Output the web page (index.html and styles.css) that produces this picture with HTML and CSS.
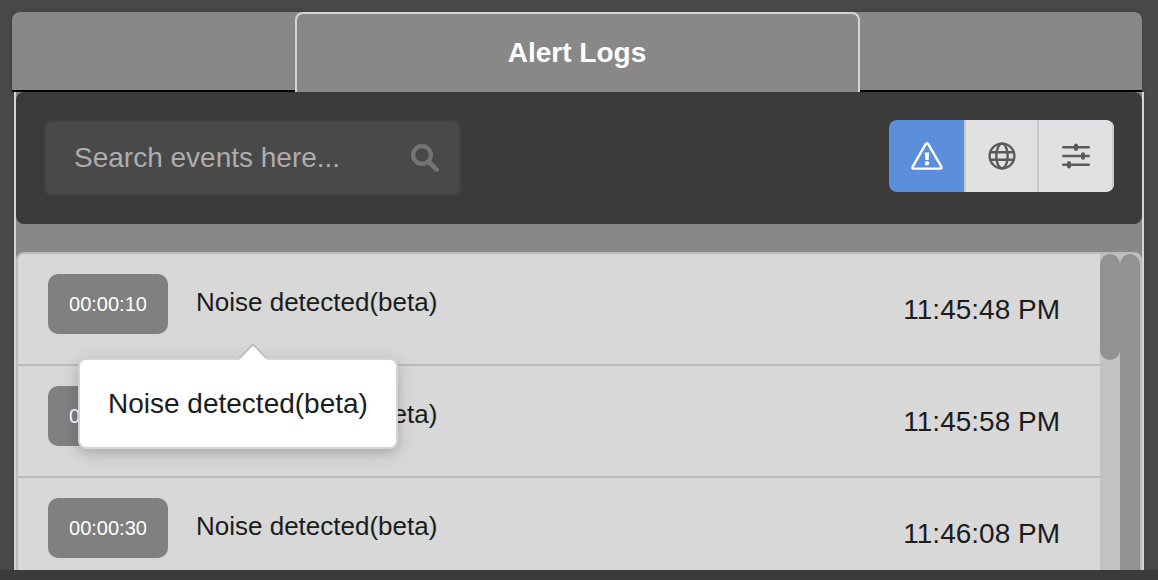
FILE: index.html
```html
<!DOCTYPE html>
<html lang="en">
<head>
    <meta charset="UTF-8">
    <meta name="viewport" content="width=device-width, initial-scale=1.0">
    <title>Alert Logs</title>
    <link rel="stylesheet" href="styles.css">
</head>
<body>
    <main class="panel">
        <nav class="tabs">
            <a class="tab active" href="#logs">Alert Logs</a>
        </nav>

        <section class="content" id="logs">
            <div class="toolbar">
                <div class="search">
                    <input type="text" placeholder="Search events here..." aria-label="Search events">
                    <svg class="search-icon" viewBox="0 0 28 28" aria-hidden="true">
                        <circle cx="11" cy="11" r="8.9" fill="none" stroke="currentColor" stroke-width="4.2"/>
                        <path d="M18 18l7.6 7.6" stroke="currentColor" stroke-width="4.6" stroke-linecap="round"/>
                    </svg>
                </div>

                <div class="filters">
                    <button class="filter selected" type="button" aria-label="Alerts">
                        <svg width="32" height="28" viewBox="0 0 32 28" fill="none" stroke="currentColor">
                            <path d="M14.7 2.2L1.7 24.7Q.8 26.6 2.8 26.6H29.2Q31.2 26.6 30.3 24.7L17.3 2.2Q16 .2 14.7 2.2Z" stroke-width="2.4" stroke-linejoin="round"/>
                            <path d="M13.8 10.6h4.4l-.6 7.4h-3.2z" fill="currentColor" stroke="none"/>
                            <circle cx="16" cy="21.2" r="2.2" fill="currentColor" stroke="none"/>
                        </svg>
                    </button>
                    <button class="filter" type="button" aria-label="Network">
                        <svg width="28" height="28" viewBox="0 0 28 28" fill="none" stroke="currentColor" stroke-width="2.4">
                            <circle cx="14" cy="14" r="12.4"/>
                            <ellipse cx="14" cy="14" rx="5.7" ry="12.4"/>
                            <path d="M2 10.2h24M2 17.8h24"/>
                        </svg>
                    </button>
                    <button class="filter" type="button" aria-label="Settings">
                        <svg width="28" height="28" viewBox="0 0 28 28" fill="none" stroke="currentColor" stroke-linecap="round">
                            <path d="M1.2 5.2h25.6M1.2 14h25.6M1.2 22.8h25.6" stroke-width="2.4"/>
                            <path d="M14 3.4v3.6M21 12.2v3.6M7 21v3.6" stroke-width="4"/>
                        </svg>
                    </button>
                </div>
            </div>

            <div class="list">
                <ul class="rows">
                    <li class="row">
                        <span class="offset">00:00:10</span>
                        <span class="message">Noise detected(beta)
                            <span class="popup" role="tooltip">Noise detected(beta)</span>
                        </span>
                        <time class="time">11:45:48 PM</time>
                    </li>
                    <li class="row">
                        <span class="offset">00:00:20</span>
                        <span class="message">Noise detected(beta)</span>
                        <time class="time">11:45:58 PM</time>
                    </li>
                    <li class="row">
                        <span class="offset">00:00:30</span>
                        <span class="message">Noise detected(beta)</span>
                        <time class="time">11:46:08 PM</time>
                    </li>
                </ul>
                <div class="scrollbar"><div class="thumb"></div></div>
                <div class="scrollbar"><div class="thumb full"></div></div>
            </div>
        </section>
    </main>
</body>
</html>
```
FILE: styles.css
```css
* {
    box-sizing: border-box;
}

body {
    display: flex;
    flex-direction: column;
    height: 100vh;
    margin: 0;
    padding: 12px 14px 0;
    overflow: hidden;
    background: #494949;
    border-bottom: 10px solid #3b3b3b;
    font-family: "Liberation Sans", Arial, sans-serif;
    font-size: 28px;
    color: #1b1c1d;
}

.panel {
    display: flex;
    flex-direction: column;
    flex: 1;
    min-height: 0;
}

/* Tabs */
.tabs {
    display: flex;
    justify-content: center;
    margin: 0 2px 0 -2px;
    background: linear-gradient(#888, #888) top / 100% 78px no-repeat #000;
    border-radius: 8px 8px 0 0;
    box-shadow: 0 0 4px rgba(0, 0, 0, 0.15);
}

.tab {
    width: 50%;
    height: 80px;
    background: #888;
    border: 2px solid #d4d4d5;
    border-bottom: none;
    border-radius: 8px 8px 0 0;
    color: #fff;
    font-weight: bold;
    line-height: 78px;
    text-align: center;
    text-decoration: none;
}

.content {
    display: flex;
    flex-direction: column;
    flex: 1;
    gap: 28px;
    min-height: 0;
    background: #888;
    border: solid #d4d4d5;
    border-width: 0 2px;
    box-shadow: 0 0 4px rgba(0, 0, 0, 0.15);
    clip-path: inset(0 -8px);
}

/* Toolbar */
.toolbar {
    display: flex;
    justify-content: space-between;
    align-items: flex-start;
    padding: 28px;
    background: #3b3b3b;
    border-radius: 8px;
}

.search {
    display: flex;
    align-items: center;
    width: 39%;
    height: 76px;
    padding: 0 20px 0 28px;
    background: #494949;
    border: 2px solid #424242;
    border-radius: 8px;
}

.search input {
    flex: 1;
    min-width: 0;
    padding: 0;
    background: none;
    border: none;
    outline: none;
    font: inherit;
    color: #fff;
}

.search input::placeholder {
    color: #adadad;
    opacity: 1;
}

.search-icon {
    width: 28px;
    height: 28px;
    color: #747474;
}

.filters {
    display: flex;
    overflow: hidden;
    border-radius: 8px;
}

.filter {
    display: flex;
    justify-content: center;
    align-items: center;
    width: 75px;
    height: 72px;
    padding: 0;
    background: #e0e1e2;
    border: none;
    border-right: 2px solid #cacbcd;
    color: #595a5a;
    cursor: pointer;
}

.filter.selected {
    background: #5b8edb;
    border-right: none;
    color: #fff;
}

.filter.selected + .filter {
    border-left: 2px solid #cacbcd;
}

/* Event list */
.list {
    display: flex;
    flex: 1;
    min-height: 0;
    overflow: hidden;
    background: #d8d8d8;
    border: 2px solid #bbb;
    border-bottom: none;
    border-radius: 8px 8px 0 0;
}

.rows {
    flex: 1;
    margin: 0;
    padding: 0;
    list-style: none;
}

.row {
    display: flex;
    align-items: flex-start;
    height: 112px;
    padding: 20px 40px 0 30px;
    border-bottom: 2px solid #bbb;
}

.offset {
    width: 120px;
    background: #808080;
    border-radius: 10px;
    color: #fff;
    font-size: 20px;
    line-height: 60px;
    text-align: center;
}

.message {
    position: relative;
    margin-left: 28px;
    font-size: 26px;
    line-height: 56px;
}

.time {
    margin-left: auto;
    line-height: 72px;
}

/* Tooltip under the hovered message */
.popup {
    position: absolute;
    top: 84px;
    left: -118px;
    z-index: 1;
    padding: 24px 28px;
    background: #fff;
    border: 2px solid #d4d4d5;
    border-radius: 8px;
    box-shadow: 0 4px 8px rgba(34, 36, 38, 0.12), 0 4px 20px rgba(34, 36, 38, 0.15);
    font-size: 28px;
    line-height: 39px;
    white-space: nowrap;
}

.popup::before {
    content: "";
    position: absolute;
    top: -10px;
    left: 163px;
    width: 20px;
    height: 20px;
    background: #fff;
    box-shadow: -2px -2px 0 #bababc;
    transform: rotate(45deg);
    clip-path: polygon(-2px -2px, 22px -2px, -2px 22px);
}

/* Scrollbars */
.scrollbar {
    width: 20px;
    background: #c2c2c2;
}

.thumb {
    height: 106px;
    background: #929292;
    border-radius: 10px;
}

.thumb.full {
    height: 100%;
    border-radius: 10px 10px 0 0;
}
```
